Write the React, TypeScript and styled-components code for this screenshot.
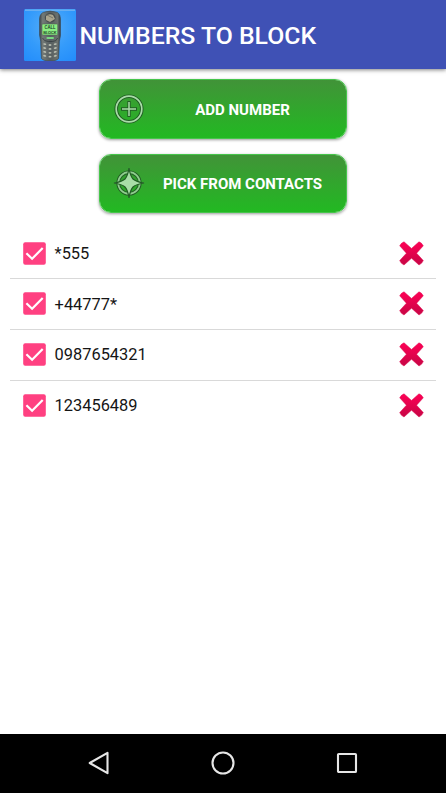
import React from "react";
import styled, { createGlobalStyle } from "styled-components";

const GlobalStyle = createGlobalStyle`
  * { box-sizing: border-box; }
  body { margin: 0; background: #fff; font-family: Roboto, "Noto Sans", sans-serif; }
`;

const Screen = styled.div`
  display: flex;
  flex-direction: column;
  height: 793px;
  width: 446px;
  overflow: hidden;
  background: #fff;
`;

const AppBar = styled.header`
  flex: none;
  display: flex;
  align-items: center;
  height: 69.3px;
  padding: 0 0 0 23.5px;
  gap: 4px;
  background: #3f51b5;
  box-shadow: 0 1px 4px rgba(0, 0, 0, 0.5);
`;

const Title = styled.h1`
  margin: 3.4px 0 0;
  color: #fff;
  font-size: 24.8px;
  font-weight: 500;
  line-height: 30px;
  white-space: nowrap;
`;

const Content = styled.main`
  flex: 1;
  display: flex;
  flex-direction: column;
  align-items: center;
  padding: 10px 10px 0;
`;

const Actions = styled.div`
  display: flex;
  flex-direction: column;
  gap: 15px;
`;

const ActionButton = styled.button`
  display: flex;
  align-items: center;
  width: 248px;
  height: 59.3px;
  padding: 0 6px 0 13px;
  border: 1px solid #46c54b;
  border-radius: 12px;
  background: linear-gradient(#419338, #22b922) padding-box;
  box-shadow: 0 1px 3px rgba(0, 0, 0, 0.4);
  color: #fff;
  font-family: inherit;
`;

const ButtonLabel = styled.span`
  flex: 1;
  padding-top: 2px;
  font-size: 15px;
  font-weight: 700;
  line-height: 20px;
  text-align: center;
  white-space: nowrap;
`;

const NumberList = styled.ul`
  width: 100%;
  margin: 15.4px 0 0;
  padding: 0;
  list-style: none;
`;

const NumberRow = styled.li`
  display: flex;
  align-items: center;
  height: 50.75px;
  padding: 0 12.5px 0 13.3px;
  border-bottom: 1px solid #d9d9d9;
  &:last-child { border-bottom-color: transparent; }
`;

const NumberText = styled.span`
  flex: 1;
  margin-left: 8.3px;
  padding-top: 1.5px;
  color: #151515;
  font-size: 16.4px;
  line-height: 22px;
`;

const NavBar = styled.nav`
  flex: none;
  display: flex;
  align-items: center;
  justify-content: center;
  gap: 100px;
  height: 59.3px;
  background: #000;
`;

const Icon = styled.svg`
  display: block;
  flex: none;
`;

const PhoneLogo = () => (
  <Icon width="52" height="52" viewBox="0 0 52 52">
    <defs>
      <radialGradient id="sky" cx=".5" cy=".35" r=".8">
        <stop offset="0" stopColor="#58aef8" />
        <stop offset=".55" stopColor="#349bfb" />
        <stop offset="1" stopColor="#238dfb" />
      </radialGradient>
      <linearGradient id="body" x2="1">
        <stop stopColor="#3c434a" />
        <stop offset=".15" stopColor="#737a77" />
        <stop offset=".5" stopColor="#565e60" />
        <stop offset=".86" stopColor="#6b716d" />
        <stop offset="1" stopColor="#343b42" />
      </linearGradient>
    </defs>
    <rect width="52" height="52" rx="1.5" fill="url(#sky)" />
    <path d="M1 1.2h50" stroke="#68aff2" strokeWidth="1.5" />
    <path d="M19 3.4q7-2.6 14.5 0q3 2 3 7v16q-1.6 6-1.4 13l-.5 10q-2 2.6-8.6 2.6t-8.6-2.6L16.9 39q.2-7-1.4-13V10q0-5 3.5-6.6Z" fill="url(#body)" stroke="#3a4852" strokeWidth=".6" />
    <ellipse cx="26.2" cy="8.8" rx="5.4" ry="4.8" fill="#484d4d" />
    <path d="M22 7q3-3 7-1l2 4-5 3-4-2Z" fill="#aaa58e" />
    <path d="m23 6 6 3" stroke="#77766a" strokeWidth="1" />
    <rect x="18" y="15" width="15.7" height="11" rx=".8" fill="#8bed82" stroke="#526454" strokeWidth=".6" />
    <text x="25.9" y="20.3" textAnchor="middle" fontFamily="Roboto" fontWeight="500" fontSize="4.6" fill="#173923">CALL</text>
    <text x="25.9" y="24.7" textAnchor="middle" fontFamily="Roboto" fontWeight="500" fontSize="4.3" fill="#173923">BLOCK</text>
    <rect x="22.4" y="28" width="7.6" height="2" rx="1" fill="#78d982" />
    <path d="M18.5 29q1.5 3.5 6 3.5h4q4 0 5.2-3.5" fill="none" stroke="#343c40" strokeWidth=".8" />
    <g fill="#b7bcb0">
      {[35.6, 39.5, 43.4, 47.3].map((y) => (
        <React.Fragment key={y}>
          <ellipse cx="20.6" cy={y - 0.5} rx="1.6" ry=".9" transform={`rotate(12 20.6 ${y})`} />
          <ellipse cx="26" cy={y + 0.4} rx="1.5" ry=".9" />
          <ellipse cx="31.4" cy={y - 0.5} rx="1.6" ry=".9" transform={`rotate(-12 31.4 ${y})`} />
        </React.Fragment>
      ))}
    </g>
  </Icon>
);

const AddIcon = () => (
  <Icon width="32" height="32" viewBox="0 0 32 32" fill="none">
    <circle cx="16" cy="16" r="12.8" stroke="#225d25" strokeWidth="3.6" />
    <circle cx="16" cy="16" r="12.8" stroke="#a9dda8" strokeWidth="1.7" />
    <path d="M16 8v16M8 16h16" stroke="#225d25" strokeWidth="3.3" />
    <path d="M16 9v14M9 16h14" stroke="#a9dda8" strokeWidth="1.5" />
  </Icon>
);

const CompassIcon = () => (
  <Icon width="32" height="32" viewBox="0 0 32 32" fill="none">
    <circle cx="16" cy="16" r="10.8" stroke="#225d25" strokeWidth="3.6" />
    <circle cx="16" cy="16" r="10.8" stroke="#8fce8e" strokeWidth="1.7" />
    <path d="M16 1Q17.2 8.8 20 12Q23.2 14.8 31 16Q23.2 17.2 20 20Q17.2 23.2 16 31Q14.8 23.2 12 20Q8.8 17.2 1 16Q8.8 14.8 12 12Q14.8 8.8 16 1Z" fill="#a9dda8" stroke="#225d25" strokeWidth="1.2" />
  </Icon>
);

const CheckedBox = () => (
  <Icon width="23" height="23" viewBox="0 0 23 23">
    <rect x=".2" y=".2" width="22.6" height="22.6" rx="2" fill="#ff4081" />
    <path d="m3.4 11.2 5.7 5.6L19.7 5.9" fill="none" stroke="#fff" strokeWidth="2.2" />
  </Icon>
);

const DeleteIcon = () => (
  <Icon width="25" height="25" viewBox="0 0 25 25">
    <defs>
      <linearGradient id="cross" x2="0" y2="1">
        <stop stopColor="#ff0055" />
        <stop offset="1" stopColor="#c60645" />
      </linearGradient>
    </defs>
    <path d="M5 .8 12.5 7.4 20 .8Q22.5 1.5 24.3 4.8L17.6 12.2l6.7 7.4q-1.2 3-4.3 4.4l-7.5-6.8L5 24Q1.8 22.6.7 19.6L7.4 12.2.7 4.8Q2 2 5 .8Z" fill="url(#cross)" stroke="#df0b51" strokeWidth=".5" strokeLinejoin="round" />
  </Icon>
);

const numbers = ["*555", "+44777*", "0987654321", "123456489"];

export default function App() {
  return (
    <Screen>
      <GlobalStyle />
      <AppBar>
        <PhoneLogo />
        <Title>NUMBERS TO BLOCK</Title>
      </AppBar>
      <Content>
        <Actions>
          <ActionButton>
            <AddIcon />
            <ButtonLabel>ADD NUMBER</ButtonLabel>
          </ActionButton>
          <ActionButton>
            <CompassIcon />
            <ButtonLabel>PICK FROM CONTACTS</ButtonLabel>
          </ActionButton>
        </Actions>
        <NumberList>
          {numbers.map((number) => (
            <NumberRow key={number}>
              <CheckedBox />
              <NumberText>{number}</NumberText>
              <DeleteIcon />
            </NumberRow>
          ))}
        </NumberList>
      </Content>
      <NavBar>
        <Icon width="24" height="24" viewBox="0 0 24 24" fill="none" stroke="#e6e6e6" strokeWidth="2.1" strokeLinejoin="round">
          <path d="M20.5 1.8v20.4L2.7 12Z" />
        </Icon>
        <Icon width="24" height="24" viewBox="0 0 24 24" fill="none" stroke="#e6e6e6" strokeWidth="2.1">
          <circle cx="12" cy="12" r="10.5" />
        </Icon>
        <Icon width="24" height="24" viewBox="0 0 24 24" fill="none" stroke="#e6e6e6" strokeWidth="2.1">
          <rect x="3" y="3" width="18" height="18" rx=".8" />
        </Icon>
      </NavBar>
    </Screen>
  );
}
